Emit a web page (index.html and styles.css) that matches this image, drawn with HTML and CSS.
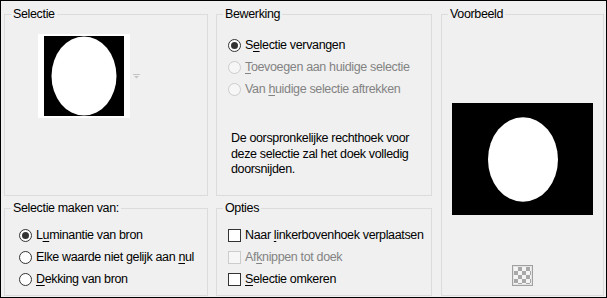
FILE: index.html
```html
<!DOCTYPE html>
<html lang="nl">
<head>
  <meta charset="UTF-8" />
  <title>Selectie uit masker</title>
  <link rel="stylesheet" href="styles.css">
</head>
<body>
  <div class="dialog">

    <!-- Bron -->
    <fieldset class="group g-selectie">
      <legend>Selectie</legend>
      <div class="thumb-row">
        <svg class="thumb" width="92" height="84" viewBox="0 0 92 84">
          <rect width="92" height="84" fill="#fff"/>
          <rect x="6" y="2" width="80" height="80" fill="#000"/>
          <ellipse cx="46" cy="42" rx="32.5" ry="39.5" fill="#fff"/>
        </svg>
        <svg class="drop" width="7" height="5" viewBox="0 0 7 5">
          <rect width="7" height="1" fill="#c4c4c4"/>
          <path d="M1 2h5L3.5 4.5z" fill="#c4c4c4"/>
        </svg>
      </div>
    </fieldset>

    <!-- Bewerking -->
    <fieldset class="group g-bewerking">
      <legend>Bewerking</legend>
      <div class="options">
        <label class="opt"><input type="radio" name="bew" checked><span>S<u>e</u>lectie vervangen</span></label>
        <label class="opt off"><input type="radio" name="bew" disabled><span><u>T</u>oevoegen aan huidige selectie</span></label>
        <label class="opt off"><input type="radio" name="bew" disabled><span>Van <u>h</u>uidige selectie aftrekken</span></label>
      </div>
      <p class="note">De oorspronkelijke rechthoek voor deze selectie zal het doek volledig doorsnijden.</p>
    </fieldset>

    <!-- Voorbeeld -->
    <fieldset class="group g-voorbeeld">
      <legend>Voorbeeld</legend>
      <div class="preview-col">
        <svg class="preview" width="141" height="112" viewBox="0 0 141 112">
          <rect width="141" height="112" fill="#000"/>
          <ellipse cx="71" cy="56.5" rx="35" ry="42.3" fill="#fff"/>
        </svg>
        <div class="checker" title="Transparantie"></div>
      </div>
    </fieldset>

    <!-- Bron-type -->
    <fieldset class="group g-maken">
      <legend>Selectie maken van:</legend>
      <div class="options">
        <label class="opt"><input type="radio" name="bron" checked><span>L<u>u</u>minantie van bron</span></label>
        <label class="opt"><input type="radio" name="bron"><span>Elke waarde niet gelijk aan <u>n</u>ul</span></label>
        <label class="opt"><input type="radio" name="bron"><span><u>D</u>ekking van bron</span></label>
      </div>
    </fieldset>

    <!-- Opties -->
    <fieldset class="group g-opties">
      <legend>Opties</legend>
      <div class="options">
        <label class="opt"><input type="checkbox"><span>Naar <u>l</u>inkerbovenhoek verplaatsen</span></label>
        <label class="opt off"><input type="checkbox" disabled><span>Af<u>k</u>nippen tot doek</span></label>
        <label class="opt"><input type="checkbox"><span><u>S</u>electie omkeren</span></label>
      </div>
    </fieldset>

  </div>
</body>
</html>
```

FILE: styles.css
```css
:root {
  --bg:       #f0f0f0;
  --frame:    #dcdcdc;
  --text:     #000;
  --disabled: #838383;
}

* { box-sizing: border-box; margin: 0; padding: 0; }

html, body {
  background: var(--bg);
  font-family: "Liberation Sans", Arial, sans-serif;
  font-size: 12.5px;
  letter-spacing: -0.35px;
  color: var(--text);
}

.dialog {
  width: 607px;
  height: 298px;
  border: 1px solid #000;
  padding: 5px 1px 1px 3px;
  display: grid;
  grid-template-columns: 204px 216px 164px;
  grid-template-rows: 190px 96px;
  column-gap: 8px;
  row-gap: 4px;
}

/* === GROEPEN === */
.group {
  border: 1px solid var(--frame);
  min-width: 0;
}
.group legend {
  margin-left: 6px;
  padding: 0 2px;
  line-height: 16px;
}
.g-selectie   { grid-column: 1; grid-row: 1; }
.g-bewerking  { grid-column: 2; grid-row: 1; }
.g-voorbeeld  { grid-column: 3; grid-row: 1 / span 2; margin-left: 1px; }
.g-maken      { grid-column: 1; grid-row: 2; }
.g-opties     { grid-column: 2; grid-row: 2; }

/* === SELECTIE === */
.thumb-row {
  display: flex;
  align-items: center;
  margin: 12px 0 0 33px;
}
.thumb { display: block; }
.drop  { display: block; margin-left: 3px; }

/* === KEUZES === */
.options {
  display: flex;
  flex-direction: column;
}
.opt {
  display: flex;
  align-items: center;
  height: 22px;
  gap: 4px;
  white-space: nowrap;
}
.opt u { text-decoration-thickness: 1px; text-underline-offset: 2px; }
.opt.off { color: var(--disabled); }

.opt input {
  appearance: none;
  width: 13px;
  height: 13px;
  flex: none;
  background: #fff;
  border: 1px solid #333;
}
.opt input[type="radio"] {
  border-radius: 50%;
  display: grid;
  place-items: center;
}
.opt input[type="radio"]:checked::before {
  content: "";
  width: 7px;
  height: 7px;
  border-radius: 50%;
  background: #333;
}
.opt input:disabled {
  border-color: #cccccc;
  background: #f6f6f6;
}

.g-bewerking .options { margin: 12px 0 0 11px; }
.g-maken .options     { margin: 8px 0 0 14px; }
.g-opties .options    { margin: 8px 0 0 11px; }

.note {
  margin: 31px 0 0 14px;
  line-height: 15.5px;
  width: 198px;
}

/* === VOORBEELD === */
.preview-col {
  display: flex;
  flex-direction: column;
  align-items: center;
}
.preview { display: block; margin-top: 81px; }
.checker {
  margin-top: 50px;
  width: 21px;
  height: 21px;
  border: 1px solid #a0a0a0;
  padding: 1px;
  background:
    repeating-conic-gradient(#a8a8a8 0 25%, #f4f4f4 0 50%) content-box 0 0 / 8px 8px,
    #e4e4e4;
}
```
